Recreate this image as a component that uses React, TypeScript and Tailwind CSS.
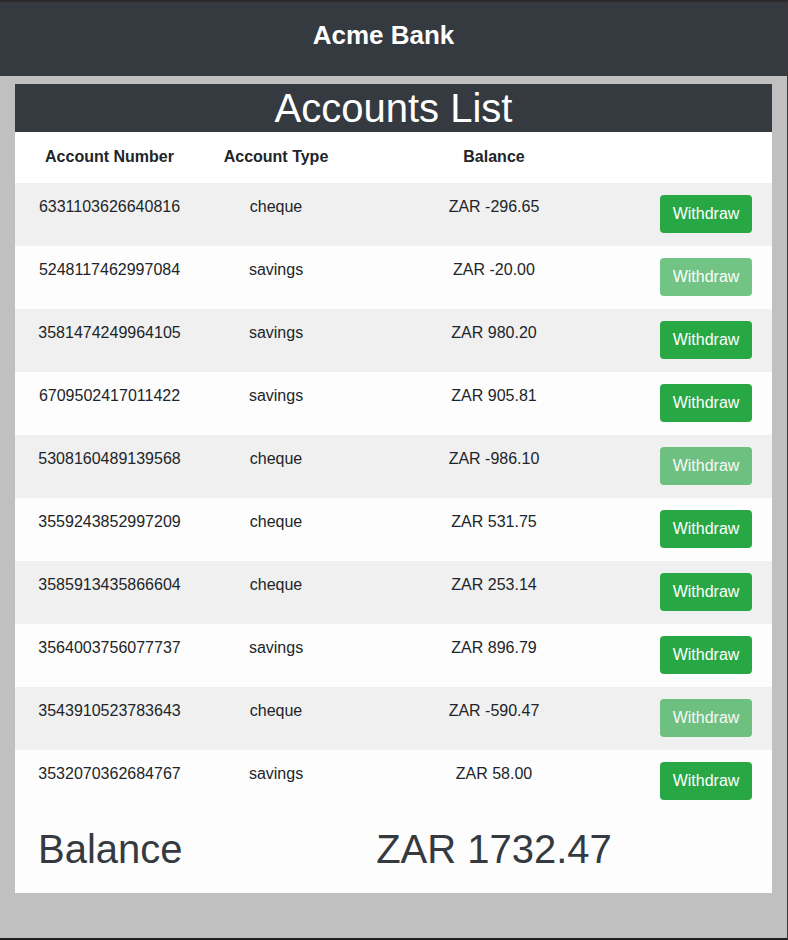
import React from "react";

const rows: { num: string; type: string; bal: string; disabled?: boolean }[] = [
  { num: "6331103626640816", type: "cheque", bal: "ZAR -296.65" },
  { num: "5248117462997084", type: "savings", bal: "ZAR -20.00", disabled: true },
  { num: "3581474249964105", type: "savings", bal: "ZAR 980.20" },
  { num: "6709502417011422", type: "savings", bal: "ZAR 905.81" },
  { num: "5308160489139568", type: "cheque", bal: "ZAR -986.10", disabled: true },
  { num: "3559243852997209", type: "cheque", bal: "ZAR 531.75" },
  { num: "3585913435866604", type: "cheque", bal: "ZAR 253.14" },
  { num: "3564003756077737", type: "savings", bal: "ZAR 896.79" },
  { num: "3543910523783643", type: "cheque", bal: "ZAR -590.47", disabled: true },
  { num: "3532070362684767", type: "savings", bal: "ZAR 58.00" },
];

const font = { fontFamily: '"Liberation Sans", Arial, sans-serif' };

export default function App() {
  return (
    <div
      className="h-[940px] w-full bg-[#c0c0c0] border-t-2 border-t-[#2a2a2a] border-r border-r-[#3a3a3a] border-b-2 border-b-[#1e1e1e] flex flex-col text-[#212529]"
      style={font}
    >
      <header className="h-[74px] bg-[#343a40] flex justify-center pr-[20px] pt-[18px]">
        <span className="text-white font-bold text-[26px] leading-[30px]">Acme Bank</span>
      </header>
      <div className="mx-[15px] mt-[8px] bg-[#fdfdfd] flex flex-col">
        <h1 className="bg-[#343a40] text-white text-[40px] leading-[48px] text-center">Accounts List</h1>
        <div className="grid grid-cols-[189px_144px_292px_1fr] h-[51px] bg-white font-bold text-[16px] leading-6 pt-[13px]">
          <div className="text-center">Account Number</div>
          <div className="text-center">Account Type</div>
          <div className="text-center">Balance</div>
          <div />
        </div>
        {rows.map((r, i) => (
          <div
            key={r.num}
            className={`grid grid-cols-[189px_144px_292px_1fr] h-[63px] text-[16px] leading-6 ${
              i % 2 === 0 ? "bg-[#f0f0f0]" : "bg-[#fdfdfd]"
            }`}
          >
            <div className="text-center pt-[12px]">{r.num}</div>
            <div className="text-center pt-[12px]">{r.type}</div>
            <div className="text-center pt-[12px]">{r.bal}</div>
            <div className="flex justify-end pr-[20px] pt-3">
              <button
                className={`h-[38px] w-[92px] rounded-[4px] bg-[#28a745] text-white text-[16px] leading-6 ${
                  r.disabled ? "opacity-65" : ""
                }`}
              >
                Withdraw
              </button>
            </div>
          </div>
        ))}
        <div className="grid grid-cols-[333px_292px_1fr] h-[80px] pt-[12px] text-[40px] leading-[48px] text-[#343a40]">
          <div className="pl-[23px]">Balance</div>
          <div className="text-center">ZAR 1732.47</div>
          <div />
        </div>
      </div>
    </div>
  );
}
